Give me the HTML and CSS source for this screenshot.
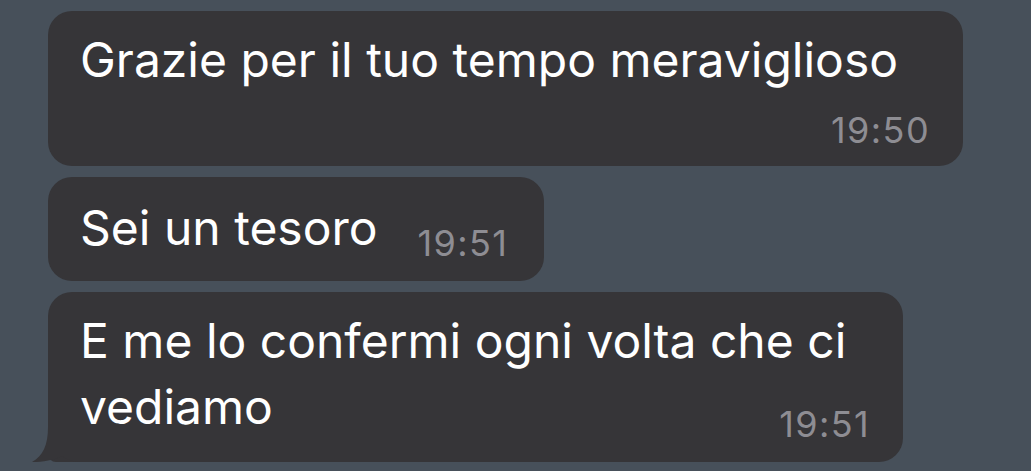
FILE: index.html
```html
<!DOCTYPE html>
<html lang="it">
<head>
<meta charset="utf-8">
<title>Chat</title>
<link rel="stylesheet" href="styles.css">
</head>
<body>
<main class="chat">
  <div class="bubble bubble-wide">
    <p class="text">Grazie per il tuo tempo meraviglioso</p>
    <div class="meta meta-below">19:50</div>
  </div>
  <div class="bubble bubble-inline">
    <p class="text">Sei un tesoro</p>
    <div class="meta meta-side">19:51</div>
  </div>
  <div class="bubble bubble-last">
    <p class="text">E me lo confermi ogni volta che ci</p>
    <div class="last-row">
      <p class="text">vediamo</p>
      <span class="meta meta-end">19:51</span>
    </div>
    <svg class="tail" width="60" height="45" viewBox="0 0 60 45" aria-hidden="true">
      <path d="M20 2 V10 C20 28 15 39 4 45 C15 45 26 43 34 39 C40 43 46 45 56 45 V2 Z" fill="#363538"/>
    </svg>
  </div>
</main>
</body>
</html>
```

FILE: styles.css
```css
html, body {
  margin: 0;
  padding: 0;
  background: #47505a;
}

body {
  font-family: Inter, "Noto Sans", "Liberation Sans", sans-serif;
  color: #ffffff;
  -webkit-font-smoothing: antialiased;
}

.chat {
  display: flex;
  flex-direction: column;
  align-items: flex-start;
  gap: 11px;
  padding: 11px 0 0 48px;
}

.bubble {
  position: relative;
  background: #363538;
  border-radius: 24px;
  padding: 16px 34px 16px 32px;
  box-sizing: border-box;
}

.text {
  margin: 0;
  font-size: 48px;
  line-height: 66px;
  font-weight: 400;
}

.meta {
  display: block;
  font-size: 36px;
  line-height: 40px;
  color: #8e8d93;
  letter-spacing: 1.4px;
  text-align: right;
}

.bubble-wide {
  width: 915px;
}

.meta-below {
  margin-top: 17px;
  margin-right: -1px;
}

.bubble-inline {
  display: flex;
  align-items: flex-end;
  gap: 40px;
  padding-top: 18px;
  padding-right: 36px;
  padding-bottom: 20px;
}

.meta-side {
  margin-bottom: -2px;
}

.bubble-last {
  width: 855px;
  padding-bottom: 22px;
  border-bottom-left-radius: 8px;
}

.last-row {
  display: flex;
  justify-content: space-between;
  align-items: flex-end;
}

.meta-end {
  margin-bottom: -4px;
  margin-right: -1px;
}

.tail {
  position: absolute;
  left: -20px;
  bottom: 0;
  display: block;
}
```
